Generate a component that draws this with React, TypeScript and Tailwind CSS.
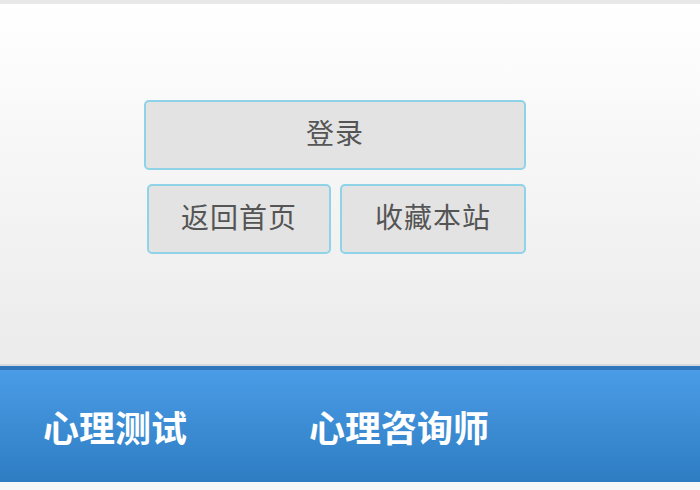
const cjkSerif = '"Liberation Serif", "Noto Sans CJK SC", serif';
const cjkSans = '"Noto Sans CJK SC", "Noto Sans", sans-serif';

function GrayButton({ label, className }: { label: string; className: string }) {
    return (
        <button
            className={`${className} flex items-center justify-center rounded-[5px] border-2 border-[#8ed3e7] bg-[#e3e3e3] text-[28px] text-[#555] tracking-[1px]`}
            style={{ fontFamily: cjkSerif }}
        >
            {label}
        </button>
    );
}

export default function App() {
    return (
        <div className="w-[700px] h-[490px] overflow-hidden bg-[#f7f7f7]">
            <div className="h-1 bg-[#e8e8e8]" />

            {/* login panel */}
            <div className="h-[360px] bg-gradient-to-b from-white to-[#ebebeb] pt-[96px] pl-[144px]">
                <div className="w-[382px] flex flex-col gap-[14px]">
                    <GrayButton label="登录" className="h-[70px] w-full" />
                    <div className="flex gap-[9px] pl-[3px]">
                        <GrayButton label="返回首页" className="h-[70px] w-[184px]" />
                        <GrayButton label="收藏本站" className="h-[70px] w-[186px]" />
                    </div>
                </div>
            </div>

            {/* nav bar */}
            <div className="h-[2px] bg-[#d5d8dc]" />
            <div className="h-1 bg-[#2f76bd]" />
            <div
                className="h-[112px] bg-gradient-to-b from-[#4a9ce6] to-[#2e7dc3] flex items-center text-white font-bold text-[36px]"
                style={{ fontFamily: cjkSans }}
            >
                <span className="ml-[43px] leading-none">心理测试</span>
                <span className="ml-[122px] leading-none">心理咨询师</span>
            </div>
        </div>
    );
}
